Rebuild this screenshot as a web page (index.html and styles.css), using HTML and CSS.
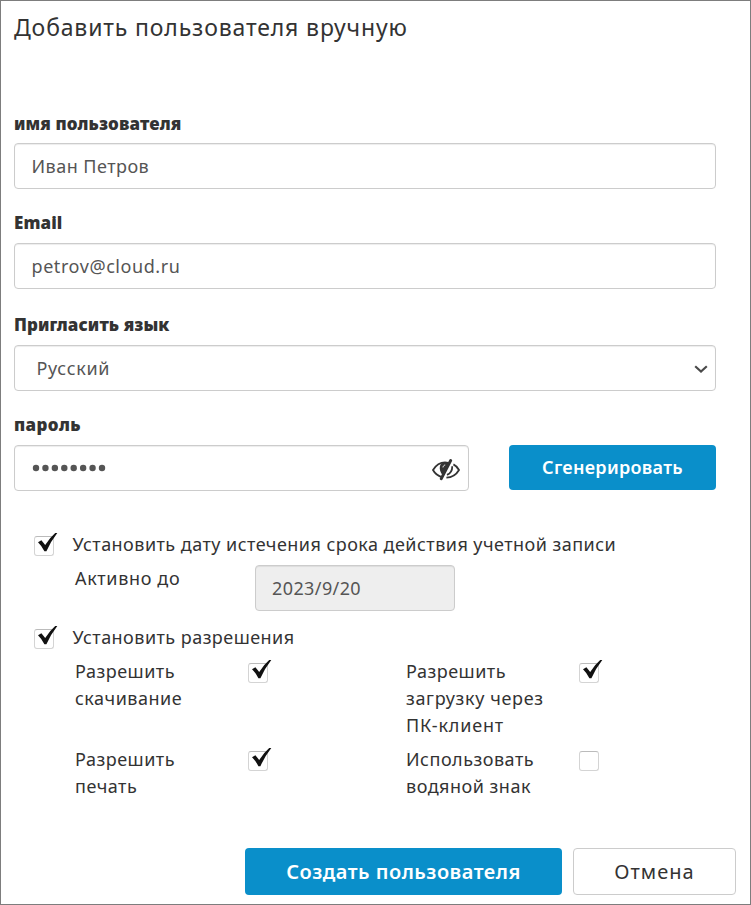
FILE: index.html
```html
<!DOCTYPE html>
<html lang="ru">
<head>
<meta charset="utf-8">
<title>Добавить пользователя вручную</title>
<link rel="stylesheet" href="styles.css">
</head>
<body>
<svg class="defs" aria-hidden="true"><symbol id="tick" viewBox="0 0 20 20"><path d="M0 9.2 L3.4 7.2 L7.2 11.9 Q11.5 5 17.2 0 L19.3 0 Q13 8 8.4 18.2 L6.4 18.2 Q3.4 12.4 0 9.2Z"/></symbol></svg>
<main class="dialog">
  <h1 class="title">Добавить пользователя вручную</h1>
  <form class="form">
    <section class="field field-name">
      <label class="label">имя пользователя</label>
      <div class="input">Иван Петров</div>
    </section>
    <section class="field field-email">
      <label class="label">Email</label>
      <div class="input email">petrov@cloud.ru</div>
    </section>
    <section class="field field-lang">
      <label class="label">Пригласить язык</label>
      <div class="input select"><span>Русский</span>
        <svg class="chevron" width="14" height="8" viewBox="0 0 14 8"><path d="M1.2 1.3 7 6.5 12.8 1.3"/></svg>
      </div>
    </section>
    <section class="field field-password">
      <label class="label password-label">пароль</label>
      <div class="password-row">
        <div class="input password">
          <svg class="dots" width="76" height="8" viewBox="0 0 76 8"><circle cx="4" cy="4" r="3.2"/><circle cx="13.43" cy="4" r="3.2"/><circle cx="22.86" cy="4" r="3.2"/><circle cx="32.29" cy="4" r="3.2"/><circle cx="41.72" cy="4" r="3.2"/><circle cx="51.15" cy="4" r="3.2"/><circle cx="60.58" cy="4" r="3.2"/><circle cx="70" cy="4" r="3.2"/></svg>
          <svg class="eye" width="28" height="22" viewBox="0 0 28 22">
            <path class="line" d="M10.5 18.3C5.8 17 2.6 14 1 11 4.2 5.8 8.4 3.4 13 3.4c1.2 0 2.2.1 3.2.4"/>
            <path class="fill" d="M7.9 7.3C8.3 4.6 11 3.3 13.5 3.3L17.4 3.8 10.6 16.2C8.3 13.6 7.3 10.3 7.9 7.3Z"/>
            <path class="slash" d="M18.6 1.6 9.3 19.6"/>
            <path class="glint" d="M11 8.4C11.2 7 12 6.2 13.2 6"/>
            <path class="line" d="M21.4 5.4C24 6.7 25.8 8.6 27 11 24.2 15.8 19.8 18.5 14.4 18.6M20.2 7.3C20.4 11.2 18.3 14.4 15 15.9"/>
          </svg>
        </div>
        <button type="button" class="button primary generate">Сгенерировать</button>
      </div>
    </section>
    <section class="options">
      <div class="option"><span class="box"><svg class="tick"><use href="#tick"/></svg></span><span class="text">Установить дату истечения срока действия учетной записи</span></div>
      <div class="expiry"><span class="text expiry-label">Активно до</span><div class="input disabled">2023/9/20</div></div>
      <div class="option"><span class="box"><svg class="tick"><use href="#tick"/></svg></span><span class="text">Установить разрешения</span></div>
      <div class="permissions">
        <span class="text">Разрешить<br>скачивание</span><span class="box"><svg class="tick"><use href="#tick"/></svg></span>
        <span class="text">Разрешить<br><span class="wide">загрузку через</span><br><span class="wider">ПК-клиент</span></span><span class="box"><svg class="tick"><use href="#tick"/></svg></span>
        <span class="text">Разрешить<br>печать</span><span class="box"><svg class="tick"><use href="#tick"/></svg></span>
        <span class="text">Использовать<br>водяной знак</span><span class="box"></span>
      </div>
    </section>
  </form>
  <footer class="footer">
    <button type="button" class="button primary create">Создать пользователя</button>
    <button type="button" class="button cancel">Отмена</button>
  </footer>
</main>
</body>
</html>
```
FILE: styles.css
```css
* { box-sizing: border-box; }
body { margin: 0; background: #fff; color: #333; font: 18px/27px "Noto Sans", sans-serif; letter-spacing: .46px; }
.defs { display: none; }
.dialog { width: 751px; height: 905px; border: 1px solid #7d7d7d; display: flex; flex-direction: column; overflow: hidden; }
.title { margin: 9px 0 0 13px; font-size: 23px; line-height: 34px; font-weight: 400; letter-spacing: .85px; }
.form { margin: 68px 34px 0 13px; }
.label { display: block; height: 24px; line-height: 24px; margin-bottom: 8px; font-size: 17px; font-weight: 900; letter-spacing: .1px; }
.password-label { letter-spacing: .4px; }
.field-name { margin-bottom: 22px; }
.field-name .label { margin-bottom: 7px; }
.field-email { margin-bottom: 24px; }
.field-lang { margin-bottom: 22px; }
.input { height: 46px; border: 1px solid #ccc; border-radius: 4px; padding: 0 16.5px; display: flex; align-items: center; background: #fff; color: #555; box-shadow: inset 0 1px 1px rgba(0,0,0,.075); }
.email { letter-spacing: .57px; }
.select { justify-content: space-between; padding: 0 7px 0 21.5px; letter-spacing: .65px; }
.chevron { margin-top: 1px; }
.chevron path { fill: none; stroke: #4a4a4a; stroke-width: 2.2; }
.password-row { display: flex; justify-content: space-between; }
.password { width: 455px; justify-content: space-between; padding: 0 8px 0 17px; }
.dots { fill: #555; }
.eye { margin: 3px 0 0; }
.eye path { fill: none; stroke: #333; }
.eye .line { stroke-width: 1.8; }
.eye .fill { fill: #333; stroke: none; }
.eye .slash { stroke-width: 3; stroke-linecap: round; }
.eye .glint { stroke: #fff; stroke-width: 1; }
.button { border: 1px solid transparent; border-radius: 4px; padding: 0; font: 20px/27px "Noto Sans", sans-serif; }
.primary { background: #0a8fca; color: #fff; font-weight: 600; letter-spacing: .5px; }
.generate { width: 207px; height: 45px; font-size: 18px; letter-spacing: .3px; }
.options { margin: 40px 0 0 20px; }
.option { display: flex; height: 34px; }
.option .text { margin-left: 18.5px; }
.option .box { margin-top: 5px; }
.box { position: relative; flex: none; width: 20px; height: 20px; border: 1px solid #d4d4d4; border-top-color: #bbb; border-radius: 3px; background: #fff; }
.tick { position: absolute; left: 2.5px; top: -4px; width: 20px; height: 20px; fill: #111; }
.expiry { display: flex; margin-left: 41px; height: 59px; }
.expiry-label { width: 180px; letter-spacing: .65px; }
.disabled { width: 200px; background: #eee; padding: 0 16px; letter-spacing: .4px; }
.permissions { display: grid; grid-template-columns: 173px 158px 173px 20px; row-gap: 7px; margin-left: 41px; align-items: start; letter-spacing: .5px; }
.permissions .box { margin-top: 5px; }
.wide { letter-spacing: .65px; }
.wider { letter-spacing: .8px; }
.footer { display: flex; justify-content: flex-end; gap: 11px; margin: auto 14px 9px 0; }
.create { width: 317px; height: 47px; }
.cancel { width: 163px; height: 47px; border-color: #ccc; background: #fff; color: #333; letter-spacing: 1px; }
```
